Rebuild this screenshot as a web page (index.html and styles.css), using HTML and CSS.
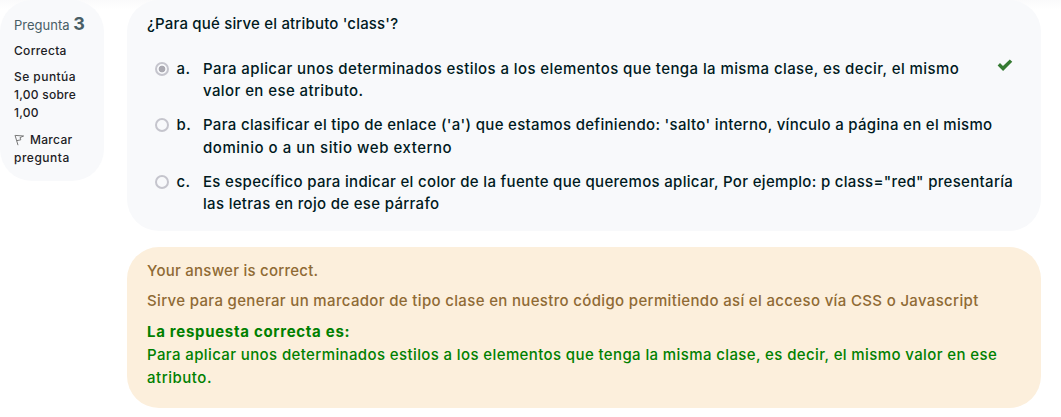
FILE: index.html
```html
<!DOCTYPE html>
<html lang="es">
<head>
<meta charset="utf-8">
<title>Pregunta 3</title>
<link rel="stylesheet" href="styles.css">
</head>
<body>
<main class="question">
  <aside class="info">
    <h3 class="number"><span class="l s1">Pregunta</span> <span class="digit">3</span></h3>
    <p class="state"><span class="l s2">Correcta</span></p>
    <p class="grade"><span class="l s3">Se puntúa</span><br><span class="l s4">1,00 sobre</span><br><span class="l s5">1,00</span></p>
    <p class="flag"><svg class="flag-icon" viewBox="0 0 12 12"><path d="M1 1.2L4 11.2M1.2 1.4L9.6 2L6 3.6L6.8 5.8L3 6.6" fill="none" stroke="#777" stroke-width="1"/></svg><span class="l s6">Marcar</span><br><span class="l s7">pregunta</span></p>
  </aside>
  <div class="content">
    <section class="formulation">
      <p class="prompt"><span class="l q">¿Para qué sirve el atributo 'class'?</span></p>
      <div class="answer">
        <i class="radio checked"></i><span class="letter">a.</span>
        <p class="text"><span class="l a1">Para aplicar unos determinados estilos a los elementos que tenga la misma clase, es decir, el mismo</span><br><span class="l a2">valor en ese atributo.</span></p>
        <svg class="check" viewBox="0 0 15 12"><path d="M0.6 6L2.8 3.8L5.6 6.6L12 0.4L14.3 2.6L5.7 11.2Z" fill="#357a32"/></svg>
      </div>
      <div class="answer">
        <i class="radio"></i><span class="letter">b.</span>
        <p class="text"><span class="l b1">Para clasificar el tipo de enlace ('a') que estamos definiendo: 'salto' interno, vínculo a página en el mismo</span><br><span class="l b2">dominio o a un sitio web externo</span></p>
      </div>
      <div class="answer">
        <i class="radio"></i><span class="letter">c.</span>
        <p class="text"><span class="l c1">Es específico para indicar el color de la fuente que queremos aplicar, Por ejemplo: p class="red" presentaría</span><br><span class="l c2">las letras en rojo de ese párrafo</span></p>
      </div>
    </section>
    <section class="feedback">
      <p class="verdict"><span class="l f1">Your answer is correct.</span></p>
      <p class="general"><span class="l f2">Sirve para generar un marcador de tipo clase en nuestro código permitiendo así el acceso vía CSS o Javascript</span></p>
      <p class="right"><b class="l f3">La respuesta correcta es:</b><br><span class="l f4">Para aplicar unos determinados estilos a los elementos que tenga la misma clase, es decir, el mismo valor en ese</span><br><span class="l f5">atributo.</span></p>
    </section>
  </div>
</main>
</body>
</html>
```

FILE: styles.css
```css
* { box-sizing: border-box; }
html { background: #fff; }
body { margin: 0; background: linear-gradient(#fafafb, #fff 9px) no-repeat; color: #001a1e; font: 500 15px/22.5px Inter, sans-serif; }
p, h3 { margin: 0; }
.l { white-space: nowrap; }
.question { display: flex; align-items: flex-start; gap: 23px; width: 1041px; }
.info { width: 104px; height: 181px; flex: none; padding: 13px 14px; border-radius: 32px; background: #f8f9fb; color: #1d2125; font-size: 12px; line-height: 18px; }
.number { font-size: 13px; font-weight: 400; line-height: 22px; color: #495e66; }
.digit { font-size: 18px; font-weight: 700; }
.state { margin-top: 6px; }
.grade { margin-top: 8px; }
.flag { margin-top: 9px; }
.flag-icon { width: 12px; height: 12px; margin-right: 4px; vertical-align: -2px; }
.content { flex: 1; min-width: 0; }
.formulation { height: 231px; padding: 13px 20px; border-radius: 32px; background: #f8f9fb; }
.prompt { margin-bottom: 22px; }
.answer { display: flex; height: 45px; margin-bottom: 11.5px; padding-left: 8px; }
.radio { width: 14px; height: 14px; flex: none; margin-top: 4px; border: 2px solid #c5c5cd; border-radius: 50%; }
.checked { background: radial-gradient(circle, #aaa9b1 3px, #f8f9fb 3.7px); }
.letter { width: 26.5px; flex: none; margin-left: 7.5px; letter-spacing: .4px; }
.text { flex: none; }
.check { width: 16px; height: 12.8px; flex: none; margin: 1.5px 0 0 38px; }
.feedback { height: 161px; margin-top: 16px; padding: 13px 20px; border-radius: 32px; background: #fcefdc; color: #8f6a34; }
.general { margin-top: 7.5px; }
.right { margin-top: 7px; line-height: 23px; color: #008000; }

/* Tracking of each line */
.s2 { letter-spacing: .32px; }
.s3 { letter-spacing: .45px; }
.s4, .s5 { letter-spacing: .25px; }
.s6 { letter-spacing: .3px; }
.s7 { letter-spacing: .5px; }
.q { letter-spacing: .18px; }
.a1, .a2 { letter-spacing: .408px; }
.b1 { letter-spacing: .315px; }
.b2 { letter-spacing: .54px; }
.c1, .c2 { letter-spacing: .317px; }
.f1 { letter-spacing: .25px; }
.f2 { letter-spacing: .34px; }
.f3 { letter-spacing: .7px; }
.f4 { letter-spacing: .385px; }
.f5 { letter-spacing: .53px; }
```
